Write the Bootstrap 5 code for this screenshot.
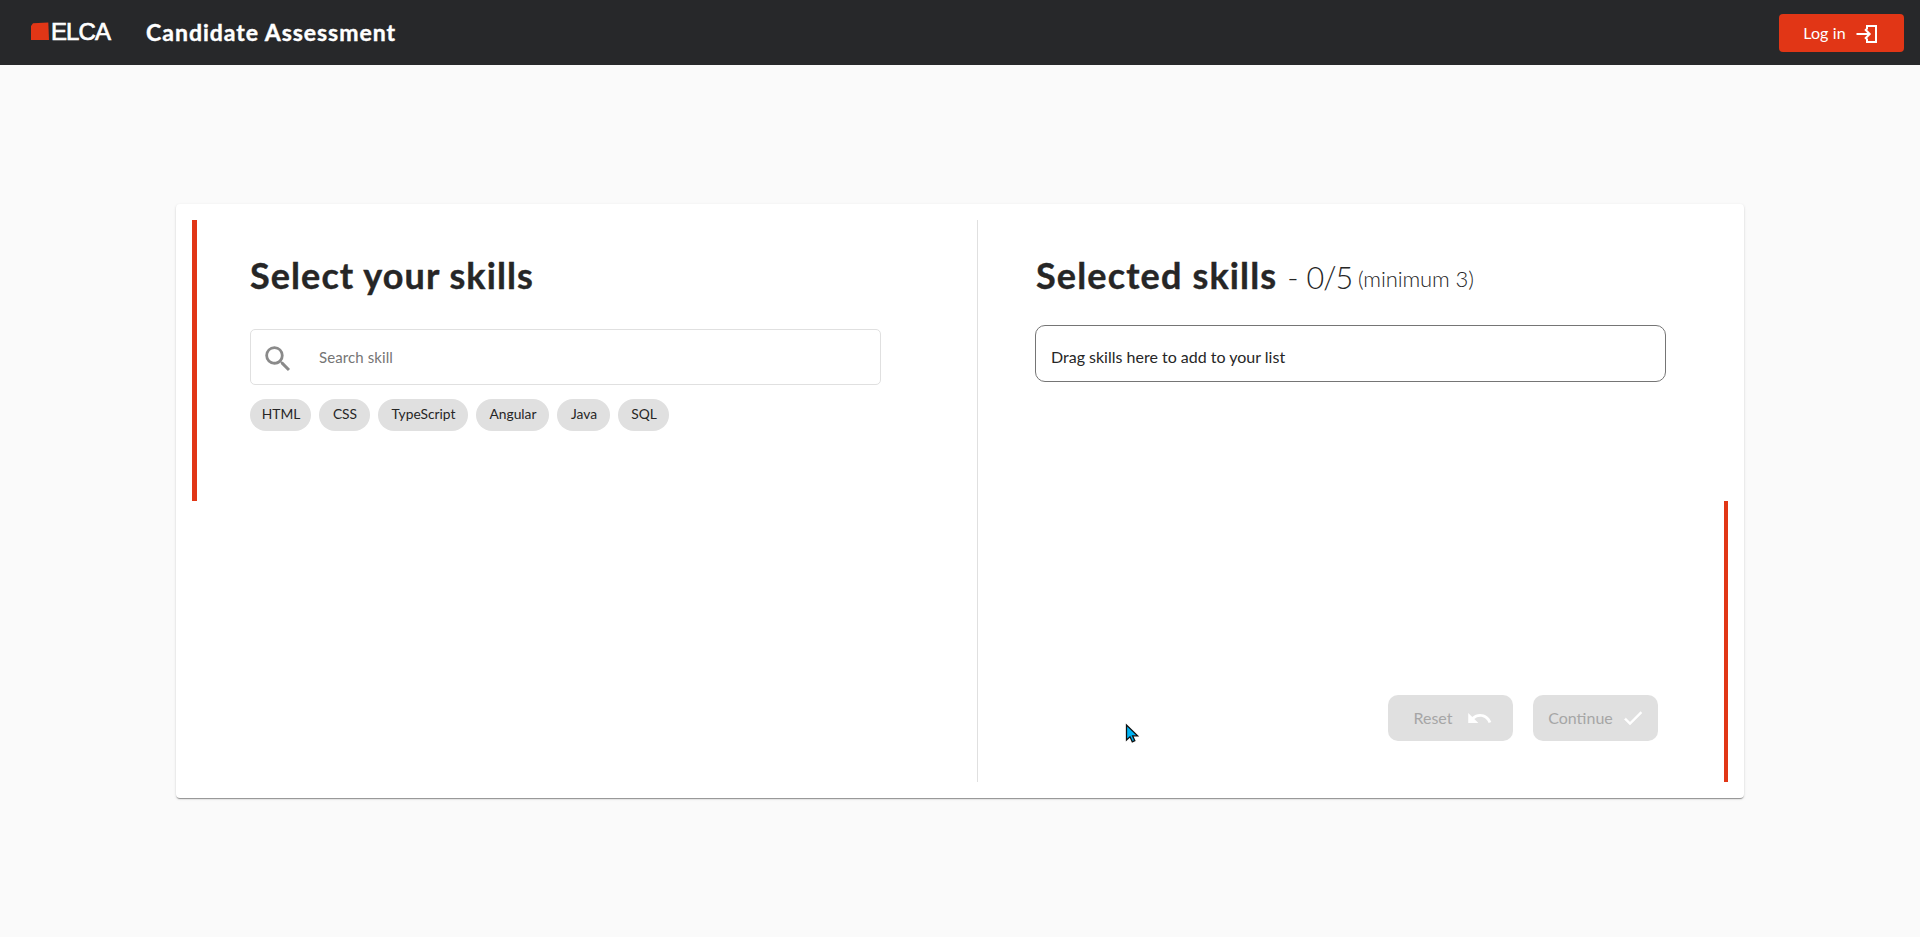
<!DOCTYPE html>
<html lang="en">
<head>
<meta charset="utf-8">
<meta name="viewport" content="width=device-width, initial-scale=1">
<title>Candidate Assessment</title>
<link href="https://cdn.jsdelivr.net/npm/bootstrap@5.3.0/dist/css/bootstrap.min.css" rel="stylesheet">
<style>
body{font-family:Lato,"Open Sans",sans-serif;background:#fafafa;color:#262626;height:937px;overflow:hidden}
.topbar{height:65px;background:#27282a;padding:0 16px 0 31px}
.brand-mark{margin-bottom:3px}
.brand-text{font:400 24px/28px "Liberation Sans",sans-serif;letter-spacing:-.9px;-webkit-text-stroke:.7px #fff;margin:0 0 2px 1px}
.app-title{font-size:23px;font-weight:700;line-height:28px;margin:0 0 2px 36px;letter-spacing:.97px;-webkit-text-stroke:.4px #fff}
.btn-login{width:125px;height:38px;margin-top:1px;background:#e13616;border-radius:4px;font-size:16px;color:#fff;padding:0 0 0 23px}
.t-login{letter-spacing:.15px;width:43px;white-space:nowrap}
.main-area{padding:139px 176px 0}
.skill-card{height:594px;padding:16px;border:0;border-radius:4px;box-shadow:0 2px 1px -1px rgba(0,0,0,.25),0 1px 1px rgba(0,0,0,.16),0 1px 3px rgba(0,0,0,.12)}
.accent{background:#e13616;height:281px;flex:none}
.pane-left{width:781px;padding:34px 0 0 53px;border-right:1px solid #e0e0e0}
.pane-left,.pane-right{flex:none}
.pane-right{width:746px;padding:34px 0 0 57px}
.pane-title{font-size:36px;font-weight:700;line-height:42px;height:42px;white-space:nowrap;letter-spacing:1.080px}
.heading-ink{-webkit-text-stroke:.4px #262626}
.selected-title{padding-left:1px;letter-spacing:1.150px}
.search-box{width:631px;height:56px;border:1px solid #e0e0e0;border-radius:5px;margin-top:33px;padding-left:10px}
.search-box svg{margin-top:3px}
.search-box input{border:0;outline:0;background:none;font-size:15px;color:#666;padding:0;margin-left:24px;width:400px;letter-spacing:.1px}
.search-box input::placeholder{color:#757575;opacity:1}
.chips{gap:8px;margin-top:14px}
.chip{height:32px;border-radius:16px;background:#e0e0e0;font-size:13.800px;line-height:30px;text-align:center;padding-left:1px}
.drop-box{width:631px;height:57px;border:1px solid #757575;border-radius:10px;margin-top:29px;padding:6px 0 0 15px;font-size:16px}
.count{font-size:30.500px;font-weight:300;letter-spacing:-1px}
.dash{margin-right:9px}
.min-note{font-size:22px;font-weight:300;letter-spacing:-.1px;position:relative;top:-2px;margin-left:-4px}
.actions{gap:20px;margin:313px 0 0 353px}
.btn-off,.btn-off:disabled{width:125px;height:46px;border:0;border-radius:10px;background:#e0e0e0;color:#a6a6a6;font-size:16px;opacity:1;padding:0 0 0 2px}
.btn-reset,.btn-reset:disabled{padding-left:5px}
.reset-icon{margin-left:13px}
.pointer{left:1125px;top:723px}
</style>
</head>
<body>
<header class="topbar d-flex align-items-center text-white">
  <svg class="brand-mark" width="19" height="18" viewBox="0 0 19 18" aria-hidden="true"><path fill="#e13616" d="M2 1.200 17.300.5 18 18H0V4z"/></svg>
  <span class="brand-text">ELCA</span>
  <h1 class="app-title">Candidate Assessment</h1>
  <button class="btn btn-login ms-auto d-flex align-items-center" type="button"><span class="t-login">Log in</span>
    <svg class="ms-2" width="26" height="24" viewBox="0 0 26 24" fill="none" stroke="#fff" stroke-width="2"><path d="M13 8.500V5h9v16h-9v-3.500M2.500 13H16M11 8.300l4.700 4.700-4.700 4.700"/></svg>
  </button>
</header>
<main class="main-area">
  <section class="card skill-card flex-row">
    <div class="accent" style="width:5px"></div>
    <div class="pane-left">
      <h2 class="pane-title mb-0"><span class="heading-ink">Select your skills</span></h2>
      <div class="search-box d-flex align-items-center">
        <svg width="34" height="34" viewBox="0 0 24 24" fill="#8a8a8a"><path d="M15.500 14h-.79l-.28-.27A6.470 6.470 0 0 0 16 9.500 6.500 6.500 0 1 0 9.500 16c1.610 0 3.090-.59 4.230-1.570l.27.28v.79l5 4.990L20.490 19zm-6 0C7.010 14 5 11.990 5 9.500S7.010 5 9.500 5 14 7.010 14 9.500 11.990 14 9.500 14z"/></svg>
        <input type="text" placeholder="Search skill" aria-label="Search skill">
      </div>
      <div class="chips d-flex">
        <span class="chip" style="width:61px">HTML</span><span class="chip" style="width:51px">CSS</span><span class="chip" style="width:90px">TypeScript</span><span class="chip" style="width:73px">Angular</span><span class="chip" style="width:53px">Java</span><span class="chip" style="width:51px">SQL</span>
      </div>
    </div>
    <div class="pane-right">
      <h2 class="pane-title selected-title mb-0"><span class="heading-ink">Selected skills</span> <span class="count"><span class="dash">-</span>0/5</span> <span class="min-note">(minimum 3)</span></h2>
      <div class="drop-box d-flex align-items-center">Drag skills here to add to your list</div>
      <div class="actions d-flex">
        <button class="btn btn-off btn-reset d-flex align-items-center justify-content-center" type="button" disabled>Reset
          <svg class="reset-icon" width="27" height="27" viewBox="0 0 24 24" fill="#fff"><path d="M12.500 8c-2.650 0-5.050.99-6.900 2.600L2 7v9h9l-3.620-3.620A7.930 7.930 0 0 1 12.500 10.500c3.540 0 6.550 2.310 7.600 5.500l2.370-.78C21.080 11.030 17.150 8 12.500 8z"/></svg></button>
        <button class="btn btn-off d-flex align-items-center justify-content-center" type="button" disabled>Continue
          <svg class="ms-2" width="24" height="24" viewBox="0 0 24 24" fill="#fff" stroke="#fff" stroke-width=".5"><path d="M9 16.170 4.830 12l-1.420 1.410L9 19 21 7l-1.410-1.410z"/></svg></button>
      </div>
    </div>
    <div class="accent align-self-end" style="width:4px"></div>
  </section>
</main>
<svg class="pointer position-absolute" width="15" height="21" viewBox="0 0 15 21" aria-hidden="true"><path fill="#00b4f5" stroke="#111" stroke-width="1.300" d="M1.500 2v15l3.500-3.200 2.300 5 2.500-1.100-2.200-4.900h5z"/></svg>
<script src="https://cdn.jsdelivr.net/npm/bootstrap@5.3.0/dist/js/bootstrap.bundle.min.js"></script>
</body>
</html>
